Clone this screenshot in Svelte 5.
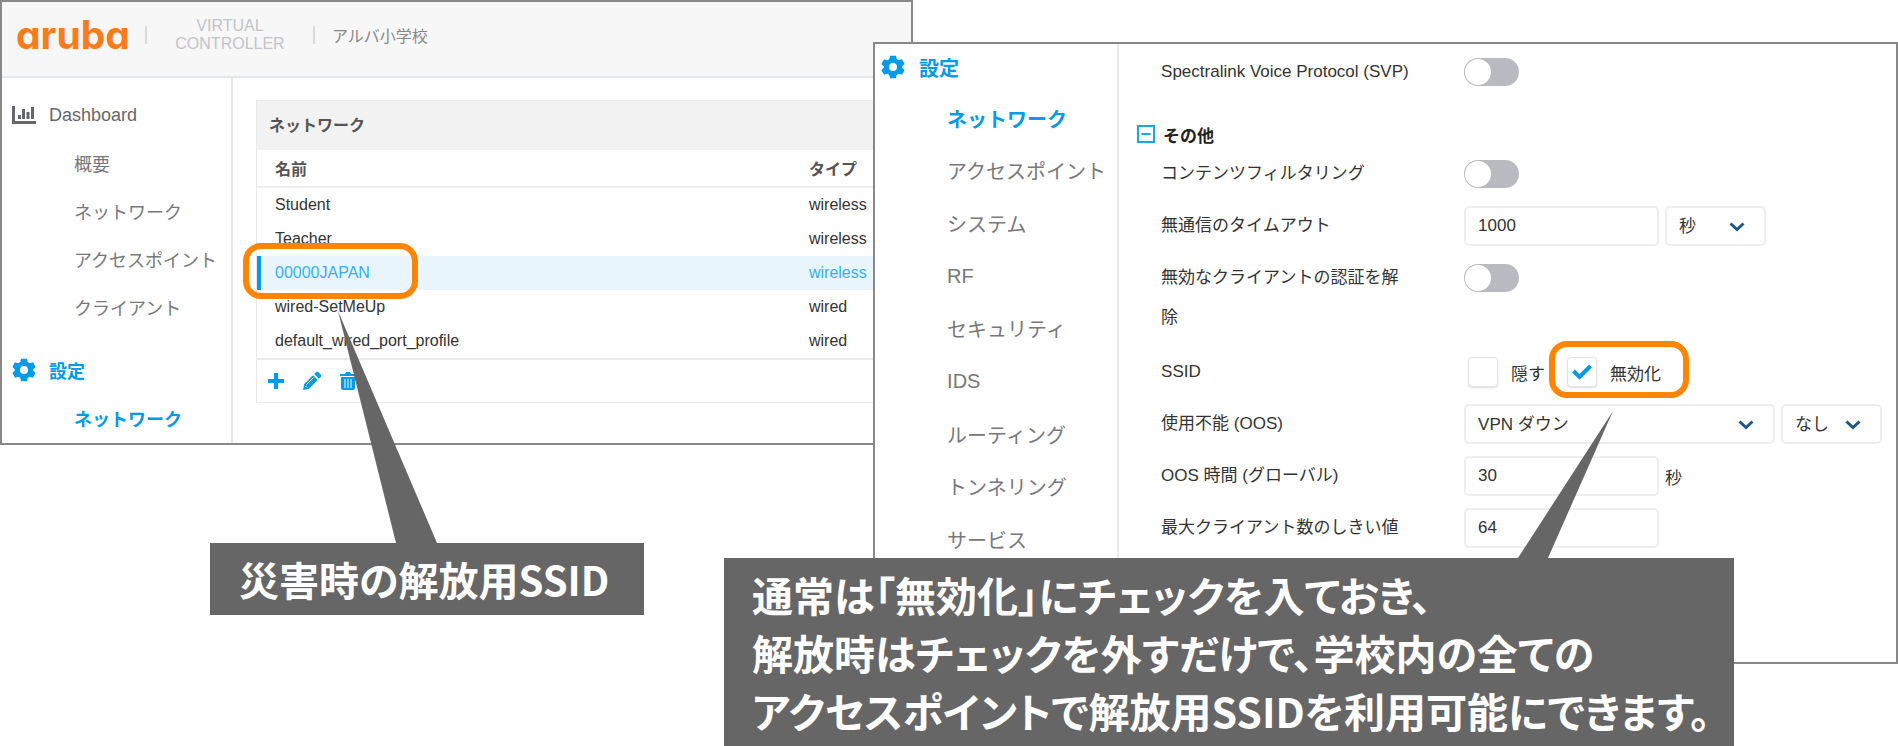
<script lang="ts">
	interface Network {
		name: string;
		type: string;
	}

	const networks: Network[] = [
		{ name: 'Student', type: 'wireless' },
		{ name: 'Teacher', type: 'wireless' },
		{ name: '00000JAPAN', type: 'wireless' },
		{ name: 'wired-SetMeUp', type: 'wired' },
		{ name: 'default_wired_port_profile', type: 'wired' }
	];

	const dashboardMenu = ['概要', 'ネットワーク', 'アクセスポイント', 'クライアント'];
	const settingsMenu = [
		'ネットワーク',
		'アクセスポイント',
		'システム',
		'RF',
		'セキュリティ',
		'IDS',
		'ルーティング',
		'トンネリング',
		'サービス'
	];

	let selected = $state('00000JAPAN');
	let svp = $state(false);
	let contentFiltering = $state(false);
	let deauthInactive = $state(false);
	let timeout = $state('1000');
	let hideSsid = $state(false);
	let disableSsid = $state(true);
	let oosTime = $state('30');
	let maxClients = $state('64');
</script>

{#snippet gear()}
	<svg class="gear" viewBox="0 0 24 24" aria-hidden="true">
		<path
			fill-rule="evenodd"
			d="M9 .8h6l.7 3.3 2 1.2 3.3-1 2.6 4.6-2.3 2.3v1.6l2.3 2.3-2.6 4.6-3.3-1-2 1.2L15 23.2H9l-.7-3.3-2-1.2-3.3 1-2.6-4.6 2.3-2.3v-1.6L.4 8.9 3 4.3l3.3 1 2-1.2zM12 8a4 4 0 1 0 0 8 4 4 0 0 0 0-8z"
		/>
	</svg>
{/snippet}

{#snippet arrow()}
	<svg class="arrow" viewBox="0 0 16 10" aria-hidden="true">
		<path d="M1.5 1.5 8 7.5l6.500-6" />
	</svg>
{/snippet}

<main class="stage">
	<section class="window controller">
		<header>
			<span class="logo">aruba</span>
			<span class="separator"></span>
			<span class="product">VIRTUAL CONTROLLER</span>
			<span class="separator"></span>
			<span class="site">アルバ小学校</span>
		</header>

		<div class="body">
			<nav class="menu">
				<a class="heading" href="#dashboard">
					<svg class="chart" viewBox="0 0 24 20" aria-hidden="true">
						<path d="M0 1h3v15h21v3H0zM6 10h3v4H6zM10 4h3v10h-3zM14.500 7h3v7h-3zM19 2h3v12h-3z" />
					</svg>
					Dashboard
				</a>
				{#each dashboardMenu as item (item)}
					<a href="#dashboard">{item}</a>
				{/each}
				<a class="heading active settings" href="#settings">{@render gear()}設定</a>
				<a class="active" href="#settings">ネットワーク</a>
			</nav>

			<div class="panel">
				<h2>ネットワーク</h2>
				<table>
					<thead>
						<tr>
							<th>名前</th>
							<th class="type">タイプ</th>
						</tr>
					</thead>
					<tbody>
						{#each networks as network (network.name)}
							<tr
								class:selected={network.name === selected}
								onclick={() => (selected = network.name)}
							>
								<td>
									{network.name}
									{#if network.name === '00000JAPAN'}
										<div class="marker"></div>
									{/if}
								</td>
								<td class="type">{network.type}</td>
							</tr>
						{/each}
					</tbody>
				</table>
				<div class="toolbar">
					<button aria-label="追加">
						<svg viewBox="0 0 20 20"><path d="M8 2h4v6h6v4h-6v6H8v-6H2V8h6z" /></svg>
					</button>
					<button aria-label="編集">
						<svg viewBox="0 0 20 20">
							<path d="M1 19l1.200-6L11 4.200l4.800 4.800L7 17.800zM12.200 3l2-2q1-.8 2 0l2.800 2.800q.8 1 0 2l-2 2z" />
							<path class="cut" d="M4.500 13.500 11.500 6.500M3.500 15l1.500 1.500" />
						</svg>
					</button>
					<button aria-label="削除">
						<svg viewBox="0 0 20 20">
							<path d="M2 3h5l1-2h4l1 2h5v2H2zM3 6h14v11q0 2-2 2H5q-2 0-2-2z" />
							<path class="cut" d="M7 8v9M10 8v9M13 8v9" />
						</svg>
					</button>
				</div>
			</div>
		</div>

		<aside class="callout">
			<svg class="pointer" viewBox="0 0 99 232" aria-hidden="true">
				<path d="M0 0 58 232H99z" />
			</svg>
			災害時の解放用SSID
		</aside>
	</section>

	<section class="window detail">
		<nav class="menu">
			<a class="heading active" href="#settings">{@render gear()}設定</a>
			{#each settingsMenu as item, i (item)}
				<a class:active={i === 0} href="#settings">{item}</a>
			{/each}
		</nav>

		<form onsubmit={(e) => e.preventDefault()}>
			<div class="row">
				<label for="svp">Spectralink Voice Protocol (SVP)</label>
				<div class="control">
					<input id="svp" class="toggle" type="checkbox" bind:checked={svp} />
				</div>
			</div>

			<button class="group" type="button">
				<svg viewBox="0 0 18 18" aria-hidden="true">
					<path d="M1 1h16v16H1zM4.500 9h9" />
				</svg>
				その他
			</button>

			<div class="row">
				<label for="filtering">コンテンツフィルタリング</label>
				<div class="control">
					<input
						id="filtering"
						class="toggle"
						type="checkbox"
						bind:checked={contentFiltering}
					/>
				</div>
			</div>
			<div class="row">
				<label for="timeout">無通信のタイムアウト</label>
				<div class="control">
					<input id="timeout" class="field" type="text" bind:value={timeout} />
					<div class="select short">
						<select aria-label="単位">
							<option>秒</option>
						</select>
						{@render arrow()}
					</div>
				</div>
			</div>
			<div class="row wrapped">
				<label for="deauth">無効なクライアントの認証を解除</label>
				<div class="control">
					<input id="deauth" class="toggle" type="checkbox" bind:checked={deauthInactive} />
				</div>
			</div>
			<div class="row">
				<span class="label">SSID</span>
				<div class="control checks">
					<label class="check">
						<input type="checkbox" bind:checked={hideSsid} />
						隠す
					</label>
					<label class="check">
						<input type="checkbox" bind:checked={disableSsid} />
						{#if disableSsid}
							<svg class="tick" viewBox="0 0 20 16" aria-hidden="true">
								<path d="M1.500 7 7.500 13 18.500 2" />
							</svg>
						{/if}
						無効化
						<span class="marker"></span>
					</label>
				</div>
			</div>
			<div class="row">
				<label for="oos">使用不能 (OOS)</label>
				<div class="control">
					<div class="select long">
						<select id="oos">
							<option>VPN ダウン</option>
						</select>
						{@render arrow()}
					</div>
					<div class="select short">
						<select aria-label="使用不能の条件">
							<option>なし</option>
						</select>
						{@render arrow()}
					</div>
				</div>
			</div>
			<div class="row">
				<label for="oos-time">OOS 時間 (グローバル)</label>
				<div class="control">
					<input id="oos-time" class="field" type="text" bind:value={oosTime} />
					<span>秒</span>
				</div>
			</div>
			<div class="row">
				<label for="max-clients">最大クライアント数のしきい値</label>
				<div class="control">
					<input id="max-clients" class="field" type="text" bind:value={maxClients} />
				</div>
			</div>
		</form>

		<aside class="callout">
			<svg class="pointer" viewBox="0 0 95 147" aria-hidden="true">
				<path d="M95 0 0 147H30z" />
			</svg>
			通常は「無効化」にチェックを入ておき、<br />
			解放時はチェックを外すだけで、学校内の全ての<br />
			アクセスポイントで解放用SSIDを利用可能にできます。
		</aside>
	</section>
</main>

<style>
	:global(body) {
		background: #fff;
	}

	.stage {
		display: grid;
		padding-bottom: 82px;
		font-family: 'Liberation Sans', 'Noto Sans CJK JP', sans-serif;
		color: #333;
	}

	.stage * {
		box-sizing: border-box;
	}

	.window {
		grid-area: 1 / 1;
		position: relative;
		background: #fff;
		border: 2px solid #888;
	}

	.controller {
		width: 48.1%;
		align-self: start;
	}

	.detail {
		margin: 42px 0 0 46%;
		display: flex;
		min-height: 622px;
	}

	/* ヘッダー */
	header {
		display: flex;
		align-items: center;
		height: 76px;
		padding: 0 14px 8px;
		background: #f7f7f7;
		border-bottom: 2px solid #e4e7ec;
	}

	.logo {
		width: 112px;
		font-family: Inter, sans-serif;
		font-size: 39px;
		font-weight: 700;
		font-feature-settings: 'cv11';
		line-height: 48px;
		color: #f97c1c;
	}

	.separator {
		width: 2px;
		height: 18px;
		margin: 0 17px;
		background: #d6d8dc;
	}

	.product {
		width: 132px;
		font-size: 16px;
		line-height: 18px;
		text-align: center;
		color: #c2c3c9;
	}

	.site {
		font-size: 16px;
		color: #888;
	}

	.body {
		display: flex;
	}

	/* サイドメニュー */
	.menu {
		flex: none;
		border-right: 2px solid #e8e9ed;
	}

	.menu a {
		display: flex;
		align-items: center;
		padding-left: 72px;
		color: #77787c;
		text-decoration: none;
		white-space: nowrap;
	}

	.menu a.heading {
		padding-left: 10px;
		gap: 13px;
		color: #66676b;
	}

	.menu a.active {
		font-weight: 700;
		color: #019ce8;
	}

	.controller .menu {
		width: 231px;
		padding: 13px 0 1px;
		font-size: 18px;
	}

	.controller .menu a {
		height: 48px;
	}

	.controller .menu .settings {
		margin-top: 15px;
	}

	.detail .menu {
		display: grid;
		grid-template-rows: 48px;
		grid-auto-rows: 1fr;
		width: 244px;
		padding-bottom: 96px;
		font-size: 20px;
	}

	.detail .menu a.heading {
		height: 46px;
		padding-left: 6px;
		gap: 14px;
	}

	.chart {
		width: 24px;
		height: 20px;
		fill: #66676b;
	}

	.gear {
		width: 24px;
		height: 24px;
		fill: #019ce8;
	}

	/* ネットワーク一覧 */
	.panel {
		flex: 1;
		margin: 22px 0 40px 23px;
		border: 1px solid #e9eaec;
		border-right: 0;
		align-self: flex-start;
	}

	h2 {
		margin: 0;
		padding-left: 12px;
		background: #f2f2f2;
		font-size: 16px;
		line-height: 49px;
		color: #555;
	}

	table {
		width: 100%;
		border-collapse: separate;
		border-spacing: 0;
		font-size: 16px;
	}

	th {
		height: 38px;
		padding: 0 0 0 18px;
		border-bottom: 2px solid #eeeff1;
		text-align: left;
		color: #555;
	}

	td {
		position: relative;
		height: 34px;
		padding: 0 0 0 18px;
	}

	th.type,
	td.type {
		width: 102px;
		padding-left: 0;
	}

	.selected td {
		background: #e8f5fc;
		color: #35b0ee;
	}

	.selected td:first-child {
		border-left: 4px solid #019ce8;
		padding-left: 14px;
	}

	.toolbar {
		display: flex;
		gap: 16px;
		height: 44px;
		padding-left: 9px;
		align-items: center;
		border-top: 2px solid #e9eaee;
	}

	.toolbar button {
		display: flex;
		padding: 0;
		border: 0;
		background: none;
		cursor: pointer;
	}

	.toolbar svg {
		width: 20px;
		height: 20px;
		fill: #019ce8;
	}

	.toolbar .cut {
		fill: none;
		stroke: #fff;
		stroke-width: 1;
	}

	/* 設定フォーム */
	form {
		flex: 1;
		padding: 2px 0 0 18px;
		font-size: 17px;
	}

	.row {
		display: flex;
		align-items: flex-start;
		padding-left: 24px;
	}

	.row.wrapped {
		padding-bottom: 2px;
	}

	.row > label,
	.label {
		flex: none;
		width: 303px;
		padding: 6px 50px 6px 0;
		line-height: 40px;
	}

	.row > label[for='svp'] {
		padding-right: 0;
	}

	.control {
		display: flex;
		align-items: center;
		gap: 6px;
		height: 52px;
	}

	.group {
		display: flex;
		align-items: center;
		gap: 8px;
		height: 50px;
		padding: 22px 0 0;
		border: 0;
		background: none;
		font: inherit;
		font-weight: 700;
		color: #222;
		cursor: pointer;
	}

	.group svg {
		width: 18px;
		height: 18px;
		fill: none;
		stroke: #19a5ec;
		stroke-width: 2;
	}

	.toggle {
		appearance: none;
		width: 55px;
		height: 28px;
		margin: 0;
		padding: 1px;
		border-radius: 14px;
		background: #b9bac0;
		cursor: pointer;
	}

	.toggle::before {
		content: '';
		display: block;
		width: 26px;
		height: 26px;
		border-radius: 50%;
		background: #fff;
	}

	.toggle:checked {
		background: #019ce8;
	}

	.toggle:checked::before {
		margin-left: auto;
	}

	.field,
	select {
		width: 100%;
		height: 40px;
		padding: 0 12px;
		border: 2px solid #eee;
		border-radius: 5px;
		background: #fff;
		font: inherit;
		color: #333;
	}

	.field {
		width: 195px;
	}

	.select {
		position: relative;
	}

	.short {
		width: 101px;
	}

	.long {
		width: 311px;
	}

	select {
		appearance: none;
	}

	.arrow {
		position: absolute;
		top: 16px;
		right: 21px;
		width: 16px;
		height: 10px;
		fill: none;
		stroke: #1f5687;
		stroke-width: 3;
		pointer-events: none;
	}

	.checks {
		gap: 22px;
		padding-left: 4px;
	}

	.check {
		position: relative;
		display: flex;
		align-items: center;
		gap: 13px;
	}

	.check input {
		appearance: none;
		width: 30px;
		height: 30px;
		margin: 0;
		border: 1px solid #e4e4e6;
		border-radius: 4px;
		background: #fff;
		box-shadow: 0 1px 2px #ddd;
	}

	.tick {
		position: absolute;
		left: 5px;
		width: 20px;
		height: 16px;
		fill: none;
		stroke: #019ce8;
		stroke-width: 4;
	}

	/* 強調枠と吹き出し */
	.marker {
		position: absolute;
		z-index: 1;
		border: 6px solid #ff8500;
		border-radius: 18px;
		pointer-events: none;
	}

	td .marker {
		top: -13px;
		left: -18px;
		width: 175px;
		height: 56px;
	}

	.check .marker {
		inset: -16px -28px -11px -18px;
	}

	.callout {
		position: absolute;
		z-index: 2;
		background: #666;
		font-family: 'Noto Sans CJK JP', sans-serif;
		font-size: 40px;
		font-weight: 700;
		font-feature-settings: 'palt';
		color: #fff;
		white-space: nowrap;
	}

	.controller .callout {
		top: 541px;
		left: 208px;
		padding: 0 35px 0 29px;
		line-height: 72px;
	}

	.detail .callout {
		top: 514px;
		left: -151px;
		padding: 7px 24px 7px 28px;
		font-size: 41px;
		line-height: 58px;
	}

	.pointer {
		position: absolute;
		bottom: 100%;
		fill: #666;
	}

	.controller .pointer {
		left: 128px;
		width: 99px;
		height: 232px;
	}

	.detail .pointer {
		left: 794px;
		width: 95px;
		height: 147px;
	}
</style>
